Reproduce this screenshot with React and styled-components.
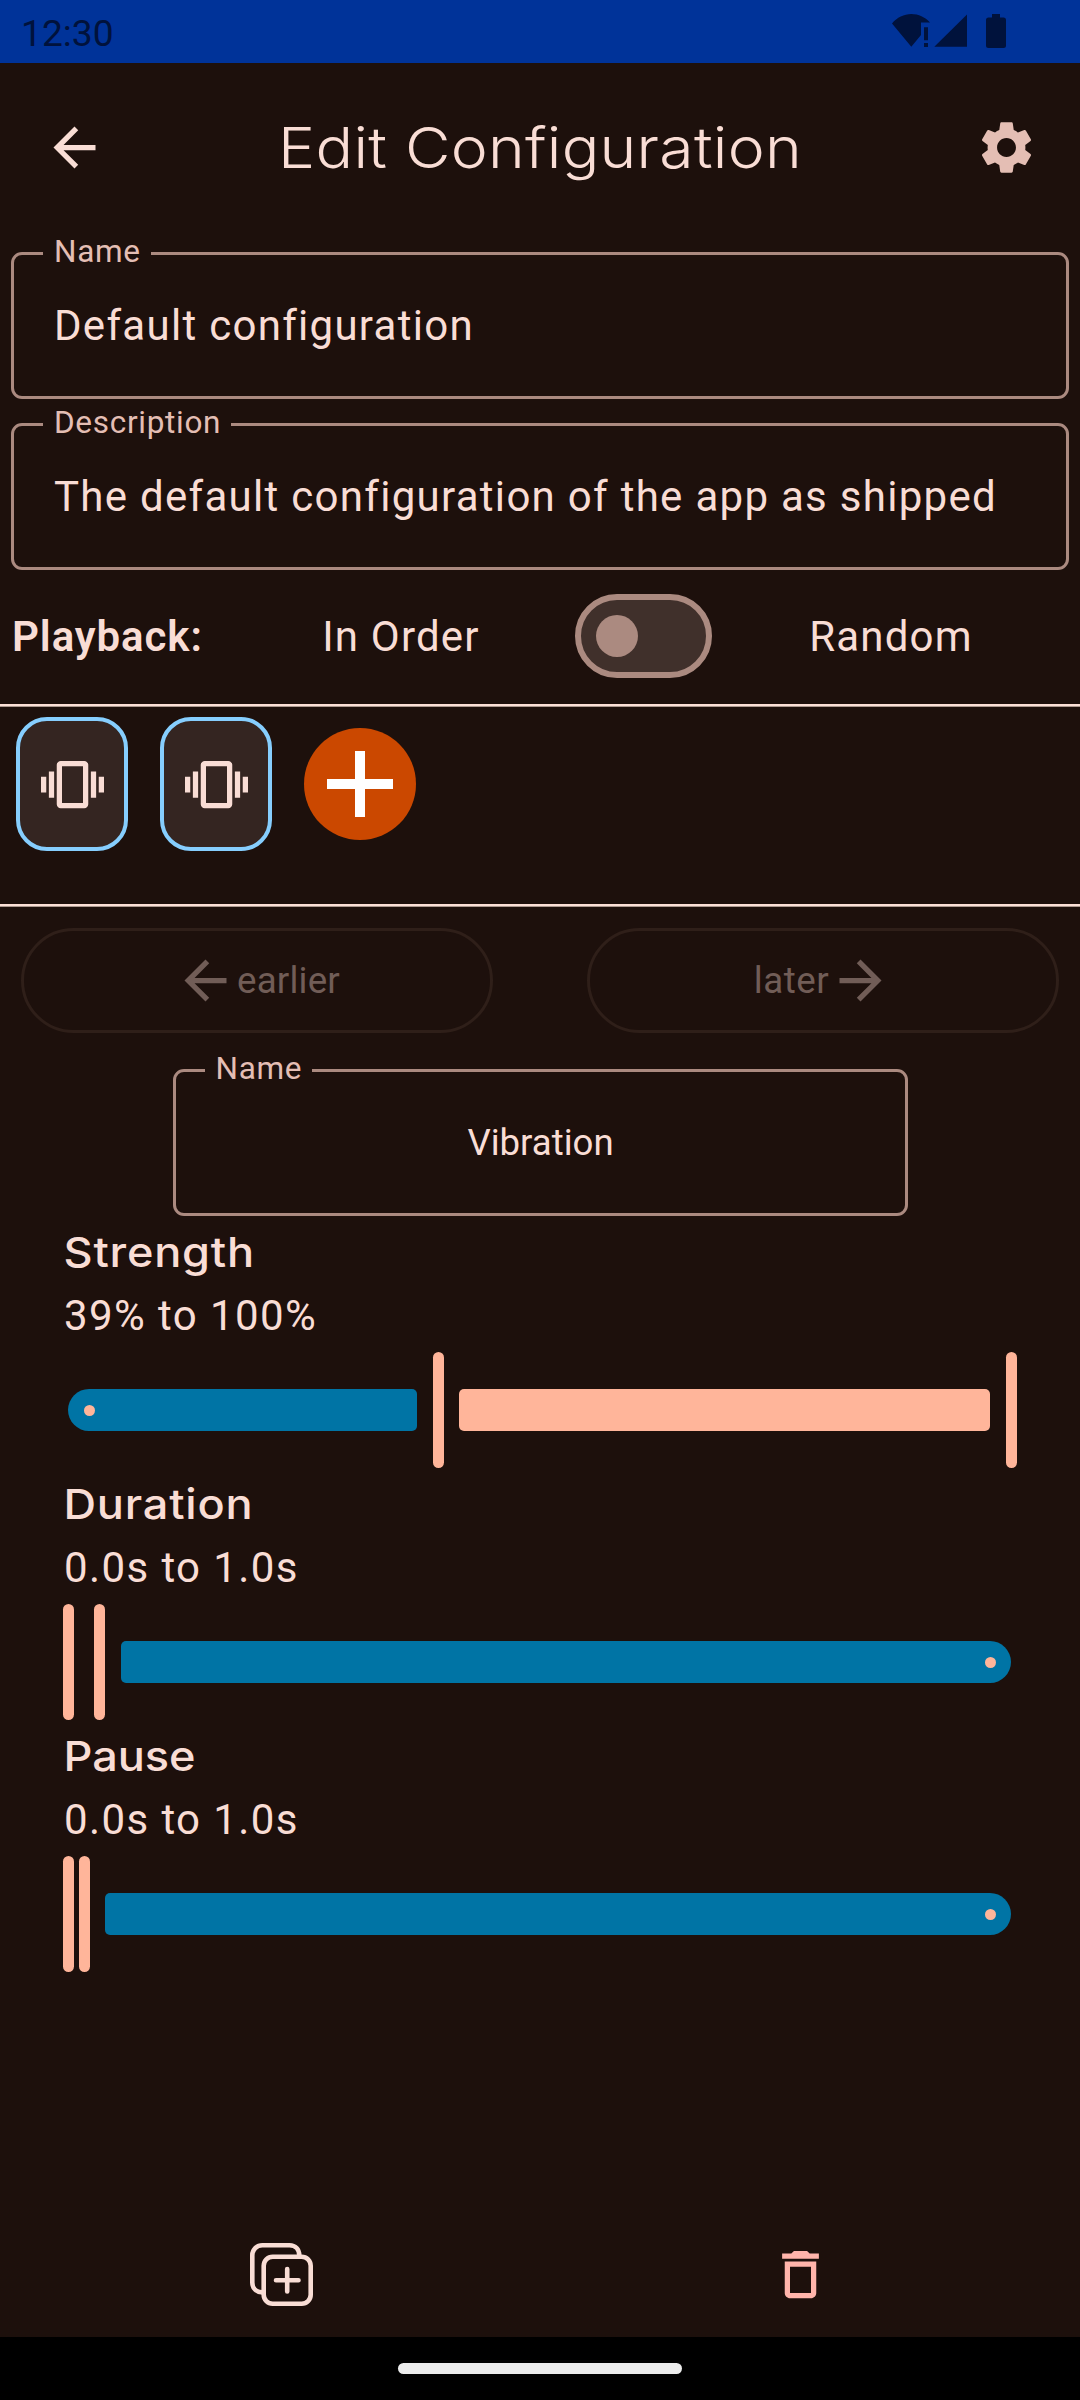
import React from "react";
import styled, { createGlobalStyle } from "styled-components";

const c = {
  bg: "#1d100c",
  text: "#f9ddd5",
  muted: "#e4beb4",
  outline: "#ab8a80",
  primary: "#ffb59a",
  track: "#0074a5",
  status: "#003399",
  statusInk: "#00123c",
  disabled: "#715d57",
  disabledLine: "#2f1f19",
  error: "#ffb4ab",
};

const Global = createGlobalStyle`
  * { box-sizing: border-box; }
  html, body { margin: 0; background: ${c.bg}; }
  body { font-family: Roboto, "Liberation Sans", sans-serif; color: ${c.text}; }
`;

const Screen = styled.div`
  width: 1080px;
  height: 2400px;
  display: flex;
  flex-direction: column;
  background: ${c.bg};
  overflow: hidden;
`;

const StatusBar = styled.div`
  flex: none;
  height: 63px;
  padding: 0 74px 0 21px;
  display: flex;
  align-items: flex-start;
  justify-content: space-between;
  background: ${c.status};
  color: ${c.statusInk};
`;

const Clock = styled.span`
  font-size: 37.2px;
  line-height: 67px;
`;

const Header = styled.header`
  flex: none;
  height: 169px;
  margin-bottom: 20px;
  padding: 0 42px 0 43px;
  display: flex;
  align-items: center;
  justify-content: space-between;
`;

const Title = styled.h1`
  margin: 0;
  font-family: Inter, sans-serif;
  font-weight: 330;
  font-size: 56.5px;
  letter-spacing: 0.25px;
  line-height: 76px;
  white-space: nowrap;
  transform: scaleX(1.105);
`;

const IconButton = styled.button`
  width: 63px;
  height: 63px;
  padding: 0;
  border: 0;
  background: none;
  color: ${(p) => p.$color || c.text};
  svg { display: block; }
`;

const Fields = styled.div`
  flex: none;
  padding: 0 11px;
  display: flex;
  flex-direction: column;
  gap: 24px;
`;

const FieldBox = styled.div`
  position: relative;
  flex: none;
  width: ${(p) => p.$width || "100%"};
  height: 147px;
  padding: 0 39px 0 40px;
  border: 3px solid ${c.outline};
  border-radius: 11px;
  display: flex;
  align-items: center;
  justify-content: ${(p) => (p.$center ? "center" : "flex-start")};
  align-self: ${(p) => (p.$center ? "center" : "auto")};
`;

const FieldLabel = styled.label`
  position: absolute;
  left: 29px;
  top: -24px;
  padding: 0 10px 0 11px;
  background: ${c.bg};
  color: ${c.muted};
  font-size: 31.5px;
  line-height: 42px;
  letter-spacing: 0.7px;
`;

const FieldValue = styled.span`
  font-size: ${(p) => (p.$small ? 36.6 : 42)}px;
  letter-spacing: ${(p) => (p.$small ? 0 : 1.29)}px;
  white-space: nowrap;
`;

const Playback = styled.div`
  flex: none;
  height: 134px;
  padding-bottom: 2px;
  display: grid;
  grid-template-columns: 281px 240px 245px 250px;
  align-items: center;
  justify-items: center;
`;

const BodyText = styled.span`
  font-size: 42px;
  letter-spacing: 1.2px;
`;

const PlaybackLabel = styled.span`
  justify-self: start;
  padding-left: 12px;
  font-size: 42px;
  font-weight: 600;
  letter-spacing: 0.9px;
`;

const SwitchTrack = styled.div`
  width: 137px;
  height: 84px;
  padding-left: 15px;
  border: 6px solid ${c.outline};
  border-radius: 42px;
  background: #40302b;
  display: flex;
  align-items: center;
`;

const SwitchThumb = styled.div`
  width: 42px;
  height: 42px;
  border-radius: 50%;
  background: ${c.outline};
`;

const Divider = styled.div`
  flex: none;
  height: 3px;
  border-bottom: 1px solid #ab988f;
  background: #fbdfd7;
`;

const Strip = styled.div`
  flex: none;
  height: 197px;
  padding: 10px 16px;
  display: flex;
  align-items: flex-start;
  gap: 32px;
`;

const PatternCard = styled.div`
  width: 112px;
  height: 134px;
  border: 4px solid #86cefe;
  border-radius: 31px;
  background: #342521;
  display: flex;
  align-items: center;
  justify-content: center;
`;

const AddButton = styled.button`
  width: 112px;
  height: 112px;
  margin-top: 11px;
  padding: 0;
  border: 0;
  border-radius: 50%;
  background: #cb4800;
  color: #fff;
  display: flex;
  align-items: center;
  justify-content: center;
`;

const OrderRow = styled.div`
  flex: none;
  height: 162px;
  padding: 21px 21px 0;
  display: flex;
  justify-content: space-between;
`;

const OrderButton = styled.button`
  width: 472px;
  height: 105px;
  padding: 0;
  border: 3px solid ${c.disabledLine};
  border-radius: 53px;
  background: none;
  color: ${c.disabled};
  font: 430 36.75px Roboto, sans-serif;
  letter-spacing: ${(p) => p.$spacing}px;
  display: flex;
  align-items: center;
  justify-content: center;
`;

const Param = styled.section`
  flex: none;
  height: 252px;
  padding: 0 63px;
`;

const ParamTitle = styled.h2`
  margin: 0;
  padding-left: 0.5px;
  font-family: Inter, sans-serif;
  font-size: 41px;
  font-weight: 500;
  line-height: 72px;
  letter-spacing: ${(p) => p.$spacing}px;
  transform: scaleX(1.1);
  transform-origin: 0 50%;
`;

const ParamValue = styled.div`
  margin-bottom: 9px;
  padding-left: 1px;
  font-size: 42px;
  line-height: 55px;
  letter-spacing: 1.4px;
`;

const Slider = styled.div`
  height: 116px;
  display: flex;
  align-items: center;
`;

const Track = styled.div`
  flex: none;
  width: ${(p) => p.$width}px;
  height: 42px;
  margin: ${(p) => p.$margin};
  padding: 0 15.5px;
  display: flex;
  align-items: center;
  justify-content: ${(p) => (p.$cap === "right" ? "flex-end" : "flex-start")};
  background: ${(p) => (p.$active ? c.primary : c.track)};
  border-radius: ${(p) =>
    p.$cap === "left" ? "21px 5px 5px 21px" : p.$cap === "right" ? "5px 21px 21px 5px" : "5px"};
`;

const Stop = styled.div`
  width: 11px;
  height: 11px;
  border-radius: 50%;
  background: ${c.primary};
`;

const Thumb = styled.div`
  flex: none;
  width: 11px;
  height: 116px;
  margin-right: ${(p) => p.$after || 0}px;
  border-radius: 6px;
  background: ${c.primary};
`;

const Spacer = styled.div`
  flex: 1;
`;

const BottomBar = styled.div`
  flex: none;
  height: 125px;
  padding: 0 20px 0 22px;
  display: grid;
  grid-template-columns: 1fr 1fr;
  align-items: center;
  justify-items: center;
`;

const NavBar = styled.div`
  flex: none;
  height: 63px;
  background: #000;
  display: flex;
  align-items: center;
  justify-content: center;
`;

const NavHandle = styled.div`
  width: 284px;
  height: 11px;
  border-radius: 6px;
  background: #ececec;
`;

const Icon = ({ d, size = 63, flip }) => (
  <svg width={size} height={size} viewBox="0 0 24 24" fill="currentColor">
    <path d={d} transform={flip ? "matrix(-1 0 0 1 24 0)" : undefined} />
  </svg>
);

const ARROW = "M20 11H7.83l5.59-5.59L12 4l-8 8 8 8 1.41-1.41L7.83 13H20v-2z";
const GEAR =
  "M19.14 12.94c.04-.3.06-.61.06-.94 0-.32-.02-.64-.07-.94l2.03-1.58c.18-.14.23-.41.12-.61l-1.92-3.32c-.12-.22-.37-.29-.59-.22l-2.39.96c-.5-.38-1.03-.7-1.62-.94l-.36-2.54c-.04-.24-.24-.41-.48-.41h-3.84c-.24 0-.43.17-.47.41l-.36 2.54c-.59.24-1.13.57-1.62.94l-2.39-.96c-.22-.08-.47 0-.59.22L2.74 8.87c-.12.21-.08.47.12.61l2.03 1.58c-.05.3-.09.63-.09.94s.02.64.07.94l-2.03 1.58c-.18.14-.23.41-.12.61l1.92 3.32c.12.22.37.29.59.22l2.39-.96c.5.38 1.03.7 1.62.94l.36 2.54c.05.24.24.41.48.41h3.84c.24 0 .44-.17.47-.41l.36-2.54c.59-.24 1.13-.56 1.62-.94l2.39.96c.22.08.47 0 .59-.22l1.92-3.32c.12-.22.07-.47-.12-.61l-2.01-1.58zM12 15.6c-1.98 0-3.6-1.62-3.6-3.6s1.62-3.6 3.6-3.6 3.6 1.62 3.6 3.6-1.62 3.6-3.6 3.6z";
const VIBRATE =
  "M0 15h2V9H0v6zm3 2h2V7H3v10zm19-8v6h2V9h-2zm-3 8h2V7h-2v10zM16.5 3h-9C6.67 3 6 3.67 6 4.5v15c0 .83.67 1.5 1.5 1.5h9c.83 0 1.5-.67 1.5-1.5v-15c0-.83-.67-1.5-1.5-1.5zM16 19H8V5h8v14z";
const TRASH =
  "M6 19c0 1.1.9 2 2 2h8c1.1 0 2-.9 2-2V7H6v12zM8 9h8v10H8V9zm7.5-5l-1-1h-5l-1 1H5v2h14V4h-3.5z";

const StatusIcons = () => (
  <svg width="114" height="63" viewBox="892 0 114 63" fill="currentColor">
    <path d="M892 23.5C897 17.5 904 14 911.3 14S925 17 930 22.5H921V35L911.3 46.7Z" />
    <path d="M924 27.3h4v13h-4zM924 43h4v4h-4z" />
    <path d="M967 14.5V46.8H934.3Z" />
    <path d="M992 14h8v3.5h3.5a2.5 2.5 0 0 1 2.5 2.5v25.5a2.5 2.5 0 0 1-2.5 2.5h-15a2.5 2.5 0 0 1-2.5-2.5V20a2.5 2.5 0 0 1 2.5-2.5h3.5z" />
  </svg>
);

const DuplicateIcon = () => (
  <svg width="63" height="63" viewBox="0 0 63 63" fill="none" stroke="currentColor" strokeWidth="4.6">
    <path d="M12.5 49.4C6.5 49.2 2.3 45.5 2.3 39.5V12.3a10 10 0 0 1 10-10H39.5C45.5 2.3 49.2 6.5 49.3 12.5" />
    <rect x="13.7" y="13.7" width="47" height="47" rx="9" />
    <path d="M26 37.2H48.5M37.2 26V48.5" strokeLinecap="round" />
  </svg>
);

const PlusIcon = () => (
  <svg width="66" height="66" viewBox="0 0 66 66" fill="currentColor">
    <path d="M28 0h10v28h28v10H38v28H28V38H0V28h28z" />
  </svg>
);

const Field = ({ label, value, small, width }) => (
  <FieldBox $center={small} $width={width}>
    <FieldLabel>{label}</FieldLabel>
    <FieldValue $small={small}>{value}</FieldValue>
  </FieldBox>
);

export default function App() {
  return (
    <Screen>
      <Global />
      <StatusBar>
        <Clock>12:30</Clock>
        <StatusIcons />
      </StatusBar>
      <Header>
        <IconButton><Icon d={ARROW} /></IconButton>
        <Title>Edit Configuration</Title>
        <IconButton $color={c.muted}><Icon d={GEAR} /></IconButton>
      </Header>
      <Fields>
        <Field label="Name" value="Default configuration" />
        <Field label="Description" value="The default configuration of the app as shipped" />
      </Fields>
      <Playback>
        <PlaybackLabel>Playback:</PlaybackLabel>
        <BodyText>In Order</BodyText>
        <SwitchTrack><SwitchThumb /></SwitchTrack>
        <BodyText>Random</BodyText>
      </Playback>
      <Divider />
      <Strip>
        <PatternCard><Icon d={VIBRATE} /></PatternCard>
        <PatternCard><Icon d={VIBRATE} /></PatternCard>
        <AddButton><PlusIcon /></AddButton>
      </Strip>
      <Divider />
      <OrderRow>
        <OrderButton $spacing={0.15}><Icon d={ARROW} />earlier</OrderButton>
        <OrderButton $spacing={0.5}>later<Icon d={ARROW} flip /></OrderButton>
      </OrderRow>
      <Field small width="735px" label="Name" value="Vibration" />
      <Param>
        <ParamTitle $spacing={0.7}>Strength</ParamTitle>
        <ParamValue>39% to 100%</ParamValue>
        <Slider>
          <Track $width={349} $cap="left" $margin="0 16px 0 5px"><Stop /></Track>
          <Thumb $after={15} />
          <Track $active $width={531} $margin="0 16px 0 0" />
          <Thumb />
        </Slider>
      </Param>
      <Param>
        <ParamTitle $spacing={0.7}>Duration</ParamTitle>
        <ParamValue>0.0s to 1.0s</ParamValue>
        <Slider>
          <Thumb $after={20} />
          <Thumb $after={15.5} />
          <Track $width={890.5} $cap="right"><Stop /></Track>
        </Slider>
      </Param>
      <Param>
        <ParamTitle $spacing={-0.1}>Pause</ParamTitle>
        <ParamValue>0.0s to 1.0s</ParamValue>
        <Slider>
          <Thumb $after={5} />
          <Thumb $after={15} />
          <Track $width={906} $cap="right"><Stop /></Track>
        </Slider>
      </Param>
      <Spacer />
      <BottomBar>
        <IconButton><DuplicateIcon /></IconButton>
        <IconButton $color={c.error}><Icon d={TRASH} /></IconButton>
      </BottomBar>
      <NavBar><NavHandle /></NavBar>
    </Screen>
  );
}
